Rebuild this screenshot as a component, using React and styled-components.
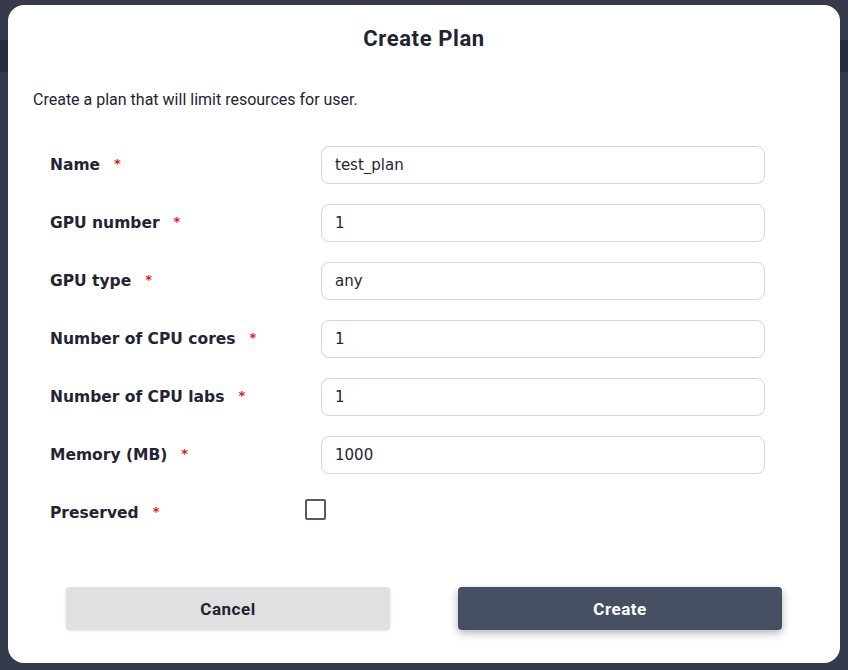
import styled, { createGlobalStyle } from "styled-components";
import { useState } from "react";

const GlobalStyle = createGlobalStyle`
  html, body {
    margin: 0;
    padding: 0;
    background: #353b4b;
  }
  * {
    box-sizing: border-box;
  }
`;

const fields = [
  { label: "Name", value: "test_plan" },
  { label: "GPU number", value: "1" },
  { label: "GPU type", value: "any" },
  { label: "Number of CPU cores", value: "1" },
  { label: "Number of CPU labs", value: "1" },
  { label: "Memory (MB)", value: "1000" },
];

const App = () => {
  const [values, setValues] = useState(fields.map((f) => f.value));
  const [preserved, setPreserved] = useState(false);

  return (
    <Backdrop>
      <GlobalStyle />
      <PageBand />
      <Dialog>
        <Title>Create Plan</Title>
        <Description>Create a plan that will limit resources for user.</Description>
        <Form>
          {fields.map((f, i) => (
            <Row key={f.label}>
              <Label>
                {f.label}
                <Required>*</Required>
              </Label>
              <Input
                value={values[i]}
                onChange={(e) => {
                  const next = [...values];
                  next[i] = e.target.value;
                  setValues(next);
                }}
              />
            </Row>
          ))}
          <Row>
            <Label>
              Preserved
              <Required>*</Required>
            </Label>
            <CheckBox
              type="checkbox"
              checked={preserved}
              onChange={() => setPreserved(!preserved)}
            />
          </Row>
        </Form>
        <Buttons>
          <Button>Cancel</Button>
          <Button primary>Create</Button>
        </Buttons>
      </Dialog>
    </Backdrop>
  );
};

export default App;

const Backdrop = styled.div`
  position: relative;
  width: 848px;
  height: 670px;
  padding: 5px 8px 0 8px;
  background: #353b4b;
  overflow: hidden;
`;

const PageBand = styled.div`
  position: absolute;
  left: 0;
  top: 40px;
  width: 100%;
  height: 32px;
  background: #262d3c;
`;

const Dialog = styled.div`
  position: relative;
  display: flex;
  flex-direction: column;
  width: 832px;
  height: 658px;
  background: #ffffff;
  border-radius: 16px;
  padding: 0 25px;
`;

const Title = styled.h2`
  margin: 0;
  padding-top: 21px;
  height: 56px;
  text-align: center;
  font-family: Roboto, "Liberation Sans", sans-serif;
  font-weight: 700;
  font-size: 22px;
  letter-spacing: 0.6px;
  line-height: 26px;
  color: #1f2430;
`;

const Description = styled.p`
  margin: 29px 0 0 0;
  font-family: Roboto, "Liberation Sans", sans-serif;
  font-size: 16px;
  line-height: 20px;
  color: #1f2430;
`;

const Form = styled.div`
  display: flex;
  flex-direction: column;
  gap: 20px;
  margin-top: 36px;
  padding-left: 17px;
`;

const Row = styled.div`
  display: grid;
  grid-template-columns: 271px 444px;
  align-items: center;
  height: 38px;
`;

const Label = styled.label`
  font-family: "DejaVu Sans", "Open Sans", sans-serif;
  font-weight: 700;
  font-size: 15.5px;
  color: #1f2533;
`;

const Required = styled.span`
  color: #f01010;
  margin-left: 14px;
  font-size: 13px;
  vertical-align: 2px;
`;

const Input = styled.input`
  width: 444px;
  height: 38px;
  border: 1px solid #d3d6df;
  border-radius: 8px;
  padding: 0 13px;
  font-family: "DejaVu Sans", "Open Sans", sans-serif;
  font-size: 15px;
  color: #1f2533;
  outline: none;
  background: #ffffff;
`;

const CheckBox = styled.input`
  appearance: none;
  width: 21px;
  height: 21px;
  margin: -8px 0 0 -16px;
  border: 2px solid #555a63;
  border-radius: 2px;
  background: #ffffff;
  cursor: pointer;
  &:checked {
    background: #474f63;
  }
`;

const Buttons = styled.div`
  display: flex;
  justify-content: space-between;
  margin-top: auto;
  padding: 0 33px 33px 33px;
`;

const Button = styled.button`
  width: 324px;
  height: 43px;
  border: none;
  border-radius: 4px;
  font-family: Roboto, "Liberation Sans", sans-serif;
  font-weight: 700;
  font-size: 17px;
  letter-spacing: 0.5px;
  cursor: pointer;
  color: ${(p) => (p.primary ? "#ffffff" : "#1f2430")};
  background: ${(p) => (p.primary ? "#474f63" : "#e0e0e0")};
  box-shadow: ${(p) =>
    p.primary
      ? "0 3px 8px rgba(0, 0, 0, 0.3)"
      : "0 1px 3px rgba(0, 0, 0, 0.12)"};
`;
